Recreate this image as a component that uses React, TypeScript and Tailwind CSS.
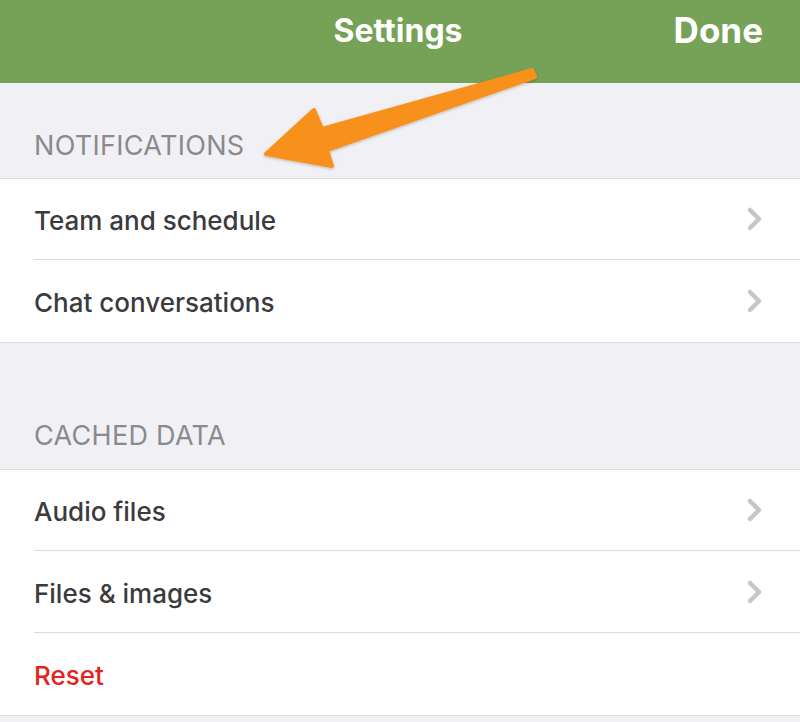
import React from "react";

const Chevron = () => (
  <svg width="20" height="26" viewBox="0 0 20 26" className="shrink-0">
    <path d="M6 4 L15 13 L6 22" fill="none" stroke="#c6c6ca" strokeWidth="4.5" strokeLinecap="round" strokeLinejoin="round" />
  </svg>
);

const Row = ({ label, last, red, chevron = true, first }: { label: string; last?: boolean; red?: boolean; chevron?: boolean; first?: boolean }) => (
  <div className="pl-[34px] bg-white">
    <div className={`${first ? "h-[81px]" : "h-[82px]"} flex items-center justify-between pr-[36px] ${last ? "" : "border-b border-[#dcdcdf]"}`}>
      <span className={`text-[26px] font-medium mt-[3px] ${red ? "text-[#e8221b]" : "text-[#3b3b3d]"}`}>{label}</span>
      {chevron && <Chevron />}
    </div>
  </div>
);

export default function App() {
  return (
    <div className="relative w-[800px] h-[722px] overflow-hidden bg-[#f1f1f5]" style={{ fontFamily: "Inter, 'Liberation Sans', sans-serif" }}>
      <div className="h-[83px] bg-[#76a258] relative">
        <span className="absolute left-0 right-0 text-center text-white font-bold text-[32px] top-[11px] pr-[4px] leading-[40px]">Settings</span>
        <span className="absolute right-[37px] top-[9px] text-white font-bold text-[35px] leading-[42px]">Done</span>
      </div>
      <div className="h-[95px] flex items-end pl-[34px] pb-[12px]">
        <span className="text-[27px] text-[#8a8a8e] tracking-[0.3px]">NOTIFICATIONS</span>
      </div>
      <div className="border-y border-[#dcdcdf]">
        <Row label="Team and schedule" first />
        <Row label="Chat conversations" last />
      </div>
      <div className="h-[126px] flex items-end pl-[34px] pb-[13px]">
        <span className="text-[27px] text-[#8a8a8e] tracking-[0.3px]">CACHED DATA</span>
      </div>
      <div className="border-y border-[#dcdcdf]">
        <Row label="Audio files" first />
        <Row label="Files & images" />
        <Row label="Reset" red last chevron={false} />
      </div>
      <svg className="absolute left-0 top-0" width="800" height="722" viewBox="0 0 800 722">
        <defs>
          <filter id="sh" x="-20%" y="-20%" width="140%" height="140%">
            <feDropShadow dx="0" dy="1" stdDeviation="1.5" floodColor="#000" floodOpacity="0.25" />
          </filter>
        </defs>
        <path
          d="M532 70 L322 129 L314 110 L266 154 L332 166 L327 150 L535 77 Z"
          fill="#f8901c"
          stroke="#f8901c"
          strokeWidth="4"
          strokeLinejoin="round"
          filter="url(#sh)"
        />
      </svg>
    </div>
  );
}
